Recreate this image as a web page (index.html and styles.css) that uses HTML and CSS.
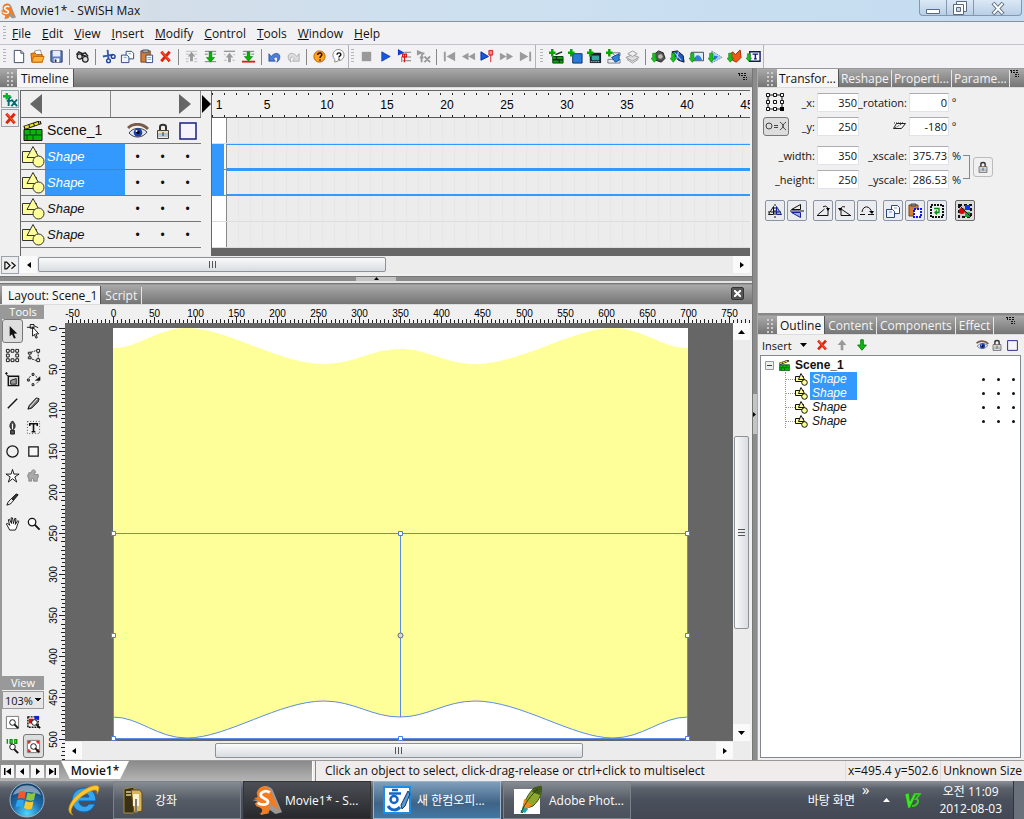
FILE: index.html
```
<!DOCTYPE html>
<html lang="ko">
<head>
<meta charset="utf-8">
<title>Movie1* - SWiSH Max</title>
<meta name="viewport" content="width=device-width, initial-scale=1">
<link rel="stylesheet" href="styles.css">
</head>
<body>
<!-- icon sprite -->
<svg class="sprite" aria-hidden="true">
	<symbol id="i-new" viewBox="0 0 16 16"><path d="M3.500 1.500h7l3 3v10h-10z" fill="#fff" stroke="#3b4a66"/><path d="M10.500 1.500v3h3" fill="#ccd" stroke="#3b4a66"/></symbol>
	<symbol id="i-open" viewBox="0 0 16 16"><path d="M5 2l6-1 2 6-7 2z" fill="#fff" stroke="#999"/><path d="M1 5l4-1 2 2h6v8H2z" fill="#f38b16" stroke="#b35600"/><path d="M2 14l2-6h11l-2 6z" fill="#ffb13b" stroke="#c86a08"/></symbol>
	<symbol id="i-save" viewBox="0 0 16 16"><path d="M2 2h12v12H3l-1-1z" fill="#5d7dc0" stroke="#26365f"/><path d="M4 2h8v6H4z" fill="#e6edf8"/><path d="M5 10h6v4H5z" fill="#fff"/><path d="M6 11h2v3H6z" fill="#26365f"/></symbol>
	<symbol id="i-find" viewBox="0 0 16 16"><path d="M1.500 6L4 3l4 2 3-1 3 4" fill="none" stroke="#222" stroke-width="1.500"/><circle cx="5" cy="8" r="2.700" fill="#ddd" stroke="#222" stroke-width="1.300"/><circle cx="11" cy="11" r="3" fill="#ddd" stroke="#222" stroke-width="1.300"/><path d="M7 6l5 2" stroke="#222" stroke-width="2"/></symbol>
	<symbol id="i-cut" viewBox="0 0 16 16"><path d="M7 1l1 10M2 8l11-2" stroke="#345aa8" stroke-width="2"/><circle cx="8" cy="12.500" r="2" fill="none" stroke="#1b3f9c" stroke-width="1.500"/><circle cx="13" cy="8" r="2" fill="none" stroke="#1b3f9c" stroke-width="1.500"/></symbol>
	<symbol id="i-copy" viewBox="0 0 16 16"><path d="M6.500 2.500h6l2 2v6h-8z" fill="#fff" stroke="#2e467f"/><path d="M1.500 6.500h6l2 2v6h-8z" fill="#eef3ff" stroke="#2e467f"/><path d="M4 9h3M9 5h3" stroke="#7f9ad6"/></symbol>
	<symbol id="i-paste" viewBox="0 0 16 16"><path d="M2 2h10v12H2z" fill="#d37e37" stroke="#7a4215"/><path d="M4 1h6v3H4z" fill="#aaa" stroke="#555"/><path d="M7.500 6.500h7v8h-7z" fill="#fff" stroke="#2e467f"/><path d="M9 9h4M9 11h4" stroke="#7f9ad6"/></symbol>
	<symbol id="i-x" viewBox="0 0 16 16"><path d="M3.500 3l9 10M12.500 3l-9 10" stroke="#e0240c" stroke-width="3"/><path d="M4 3l8 9" stroke="#ff6b4a"/></symbol>
	<symbol id="i-up" viewBox="0 0 16 16"><path d="M8 3l4 5H9.500v5h-3V8H4z" fill="#999"/><path d="M2 2.500h12M2 5.500h3M11 5.500h3M2 10.500h3M11 10.500h3M2 13.500h3M11 13.500h3" stroke="#bbb"/></symbol>
	<symbol id="i-down" viewBox="0 0 16 16"><path d="M2 2.500h12M2 5.500h3M11 5.500h3M2 13.500h12" stroke="#777"/><path d="M8 14l4.500-5H9.500V3h-3v6H3.500z" fill="#00b400" stroke="#006c00" stroke-width=".500"/></symbol>
	<symbol id="i-top" viewBox="0 0 16 16"><path d="M2 2.500h12" stroke="#999" stroke-width="1.500"/><path d="M8 4l4 5H9.500v5h-3V9H4z" fill="#999"/><path d="M2 6h2M12 6h2M2 12h3M11 12h3" stroke="#bbb"/></symbol>
	<symbol id="i-bottom" viewBox="0 0 16 16"><path d="M1 13.500h14" stroke="#e02020" stroke-width="2"/><path d="M2 2.500h12M2 5.500h3M11 5.500h3" stroke="#777"/><path d="M8 13l4.500-5H9.500V3h-3v5H3.500z" fill="#00b400" stroke="#006c00" stroke-width=".500"/></symbol>
	<symbol id="i-undo" viewBox="0 0 16 16"><path d="M2 5v8h7l-2-2.500c3-4 6-1 3.500 3.500 5-3 4-11-2-9-2 .500-3.500 2-4 3z" fill="#4a7fd8" stroke="#1c3f96" stroke-width=".700"/></symbol>
	<symbol id="i-redo" viewBox="0 0 16 16"><path d="M14 5v8H7l2-2.500c-3-4-6-1-3.500 3.500-5-3-4-11 2-9 2 .500 3.500 2 4 3z" fill="#ddd" stroke="#999" stroke-width=".700"/></symbol>
	<symbol id="i-help" viewBox="0 0 16 16"><circle cx="8" cy="8" r="6" fill="#ffa51d" stroke="#b65f00"/><path d="M6 6.500c0-3 4.500-3 4.500-.500 0 1.500-2 1.500-2 3.500M8.500 11v1.500" fill="none" stroke="#3a1500" stroke-width="1.700"/></symbol>
	<symbol id="i-what" viewBox="0 0 16 16"><path d="M4 14v-3a6 6 0 1 1 4 1.500z" fill="#fff" stroke="#888"/><path d="M6.500 6c0-2.500 4-2.500 4 0 0 1.500-2 1-2 3M8.500 10v1.500" fill="none" stroke="#111" stroke-width="1.500"/></symbol>
	<symbol id="i-stop" viewBox="0 0 16 16"><path d="M3 3h10v10H3z" fill="#999"/></symbol>
	<symbol id="i-play" viewBox="0 0 16 16"><path d="M4 3l9 5-9 5z" fill="#1857e0" stroke="#06309a" stroke-width=".700"/></symbol>
	<symbol id="i-playtl" viewBox="0 0 16 16"><path d="M8 3.500h7M7 8.500h8M6 12.500h9M5 8v6" stroke="#777"/><path d="M1 0l7 4-7 3z" fill="#1240d0"/><path d="M8 5v9M6 5.500h4v3H6z" stroke="#d41717" stroke-width="1.300" fill="none"/></symbol>
	<symbol id="i-playfx" viewBox="0 0 16 16"><path d="M1 1l7 3-7 3z" fill="#999"/><path d="M9 5c-3-1-3 1-3 9M4 9h4M9 8l6 6M15 8l-6 6" stroke="#999" stroke-width="2" fill="none"/></symbol>
	<symbol id="i-first" viewBox="0 0 16 16"><path d="M2 3h2v10H2zM14 3v10L5 8z" fill="#9a9a9a"/></symbol>
	<symbol id="i-rew" viewBox="0 0 16 16"><path d="M8 4v8L1 8zM15 4v8L8 8z" fill="#9a9a9a"/></symbol>
	<symbol id="i-playto" viewBox="0 0 16 16"><path d="M1 3l8 5-8 4z" fill="#1857e0" stroke="#06309a"/><path d="M9.500 1.500h4v5h-4z" fill="#f88" stroke="#d41717"/><path d="M11.500 6v8" stroke="#d41717"/></symbol>
	<symbol id="i-ff" viewBox="0 0 16 16"><path d="M8 4v8l7-4zM1 4v8l7-4z" fill="#9a9a9a"/></symbol>
	<symbol id="i-last" viewBox="0 0 16 16"><path d="M12 3h2v10h-2zM2 3v10l9-5z" fill="#9a9a9a"/></symbol>
	<symbol id="plus" viewBox="0 0 16 16"><path d="M4 0v9M0 4.500h8" stroke="#00a800" stroke-width="3"/></symbol>
	<symbol id="i-addscene" viewBox="0 0 16 16"><path d="M4 8h11v7H4z" fill="#0a0" stroke="#041"/><path d="M7 6l7-3M4 11.500h11M8 8v3M11 12v3" stroke="#222" stroke-width="1.500"/><use href="#plus" width="14" height="14"/></symbol>
	<symbol id="i-addmovie" viewBox="0 0 16 16"><path d="M5 5h10v10H5z" fill="#277bd8" stroke="#0b2d6b"/><use href="#plus" width="14" height="14"/></symbol>
	<symbol id="i-addfilm" viewBox="0 0 16 16"><path d="M3 4h12v11H3z" fill="#1a2230"/><path d="M5 7h8v5H5z" fill="#32a6a0"/><path d="M4 13.500h10" stroke="#fff" stroke-dasharray="1 1"/><use href="#plus" width="14" height="14"/></symbol>
	<symbol id="i-addbtn" viewBox="0 0 16 16"><path d="M7 4h8v3H9zM2 11h13v4H2z" fill="#e6edf5" stroke="#778"/><path d="M6 9l8-4v7l-4 2z" fill="#2d83d6" stroke="#124a9c"/><use href="#plus" width="14" height="14"/></symbol>
	<symbol id="i-layers" viewBox="0 0 16 16"><path d="M1 9l7-3 7 3-7 4z" fill="#ddd" stroke="#999"/><path d="M3 5l5-3 5 3-5 3z" fill="#eee" stroke="#999"/><path d="M2 11l6 4 6-4" fill="none" stroke="#999"/></symbol>
	<symbol id="inarrow" viewBox="0 0 16 16"><path d="M4 15l4-5H6V4H2v6H0z" fill="#16c21b" stroke="#067c0b" stroke-width=".700"/></symbol>
	<symbol id="i-snd" viewBox="0 0 16 16"><path d="M3 6l5-4 5 2 2 6-4 4-6-2z" fill="#555" stroke="#222"/><circle cx="10" cy="8" r="2.500" fill="#bbb"/><use href="#inarrow" width="14" height="16"/></symbol>
	<symbol id="i-anim" viewBox="0 0 16 16"><path d="M2 3l6-1 6 5 1 7-6-2-4-5z" fill="#1c5ec8" stroke="#111"/><path d="M5 4l7 8M9 3l-2 8" stroke="#dfe8ff"/><use href="#inarrow" width="14" height="16"/></symbol>
	<symbol id="i-img" viewBox="0 0 16 16"><path d="M2.500 3.500h13v9h-13z" fill="#dcefff" stroke="#444"/><path d="M6 12c0-7 6-7 8 0z" fill="#2f7fe0"/><use href="#inarrow" width="14" height="16"/></symbol>
	<symbol id="i-vec" viewBox="0 0 16 16"><path d="M4 2l11 7-11 6z" fill="#a4d6fb" stroke="#888" stroke-dasharray="2 1"/><path d="M6 7l5 1-4 4z" fill="#2a6fda"/><use href="#inarrow" width="14" height="16"/></symbol>
	<symbol id="i-vid" viewBox="0 0 16 16"><path d="M3 6l3-3 3 3 5-5 1 8-5 5-6-3z" fill="#f05a18" stroke="#a32400"/><use href="#inarrow" width="14" height="16"/></symbol>
	<symbol id="i-txt" viewBox="0 0 16 16"><path d="M4 3h11v10H4z" fill="#fff" stroke="#101c5a" stroke-width="1.500"/><path d="M7 5.500h6M10 5v6M8.500 10.500h3" stroke="#101c5a" stroke-width="1.500"/><use href="#inarrow" width="12" height="16"/></symbol>
	<symbol id="i-menu" viewBox="0 0 10 10"><path d="M0 1.500h8M3 3.500h6M5 5.500h4M5 7.500h4M1.500 2v2" fill="none" stroke="#111" stroke-dasharray="2 1"/></symbol>
	<symbol id="i-fx" viewBox="0 0 16 16"><path d="M9 6c-3-1-3 1-3 9M4 9.500h5M9 8l6 7M15 8l-6 7" stroke="#046a72" stroke-width="2" fill="none"/><path d="M4 1v7M0 4.500h8" stroke="#00b52a" stroke-width="2.500"/></symbol>
	<symbol id="i-shape" viewBox="0 0 24 24"><path d="M1.500 6.500h14v11h-14z" fill="#ff9" stroke="#333"/><path d="M12 1.500l6 11H6z" fill="#ff9" stroke="#333"/><circle cx="17.500" cy="16.500" r="5.500" fill="#ff9" stroke="#333"/></symbol>
	<symbol id="i-shape-s" viewBox="0 0 13 13"><path d="M.500 3.500h8v5h-8z" fill="#ff9" stroke="#111"/><path d="M6 .500l3.500 6h-6z" fill="#ff9" stroke="#111"/><circle cx="9.500" cy="9.500" r="2.800" fill="#ff9" stroke="#111"/></symbol>
	<symbol id="i-scene" viewBox="0 0 20 20"><path d="M1 8.500h18v11H1z" fill="#05b60b" stroke="#111"/><path d="M1 14h18M7 9v5M13 9v5M10 14v5M4 14v5" stroke="#064c08"/><path d="M1 7L18 1" stroke="#111" stroke-width="4"/><path d="M2 6.500L17 1.500" stroke="#e9e020" stroke-width="2.500" stroke-dasharray="4 1"/></symbol>
	<symbol id="i-eye" viewBox="0 0 22 16"><path d="M1 5C6 0 15 0 21 6" fill="none" stroke="#7a5a48" stroke-width="3"/><path d="M2 10c4-6 13-6 18-1-4 6-13 7-18 1z" fill="#dde4f4" stroke="#444"/><circle cx="11" cy="9.500" r="4.300" fill="#1d3fac"/><circle cx="11" cy="9.500" r="1.700" fill="#001"/><circle cx="9.500" cy="8" r="1" fill="#fff"/></symbol>
	<symbol id="i-lock" viewBox="0 0 14 16"><path d="M4 8V4c0-3 6-3 6 0v4" fill="none" stroke="#333" stroke-width="2"/><path d="M1.500 7.500h11v8h-11z" fill="#eee" stroke="#444"/><path d="M2 9h10" stroke="#f0d070"/><path d="M2 11h10" stroke="#6898c8"/><path d="M2 13h10" stroke="#9a9a9a"/><path d="M7 9v4" stroke="#333"/></symbol>
	<symbol id="i-box" viewBox="0 0 18 18"><path d="M1 1h16v16H1z" fill="#f4f4fa" stroke="#1a1f80" stroke-width="1.500"/></symbol>
	<symbol id="t-arrow" viewBox="0 0 16 16"><path d="M5 2v11l2.500-2 2 4.500 2-.700-2-4.500 3.500-.300z" fill="#111"/></symbol>
	<symbol id="t-sub" viewBox="0 0 16 16"><path d="M7 3v10l2-2 1.500 4 1.500-.500-1.500-4h3z" fill="#fff" stroke="#111"/><path d="M1 3.500h5M4.500.500h4v4h-4zM9 2l4 2" fill="none" stroke="#111"/></symbol>
	<symbol id="t-scale" viewBox="0 0 16 16"><path d="M3 3h10v10H3z" fill="none" stroke="#111" stroke-dasharray="1 1"/><g fill="#fff" stroke="#111"><path d="M1.500 1.500h3v3h-3zM6.500 1.500h3v3h-3zM11.500 1.500h3v3h-3zM1.500 6.500h3v3h-3zM11.500 6.500h3v3h-3zM1.500 11.500h3v3h-3zM6.500 11.500h3v3h-3zM11.500 11.500h3v3h-3z"/></g></symbol>
	<symbol id="t-persp" viewBox="0 0 16 16"><path d="M13 2L4 5v6l9 3z" fill="none" stroke="#111" stroke-dasharray="2 1"/><path d="M11.500 1.500h3v3h-3zM11.500 11.500h3v3h-3zM2.500 4.500h3v2h-3zM2.500 9.500h3v2h-3z" fill="#fff" stroke="#111"/></symbol>
	<symbol id="t-fill" viewBox="0 0 16 16"><path d="M3.500 4.500h11v10h-11z" fill="#ddd" stroke="#111" stroke-width="1.500"/><path d="M6 13V9l6-2v6z" fill="#999" stroke="#222"/><path d="M0 1.500h3M1.500 0v3l3 2" fill="none" stroke="#111"/></symbol>
	<symbol id="t-motion" viewBox="0 0 16 16"><path d="M3 10C2 4 8 1 12 6" fill="none" stroke="#111" stroke-dasharray="2 2"/><path d="M6.500 1.500h2v2h-2zM1.500 7.500h2v2h-2zM6.500 12.500h2v2h-2z" fill="#fff" stroke="#111"/><path d="M10 9h5V5zM11 12l3-2" fill="#111" stroke="#111" stroke-width=".500"/></symbol>
	<symbol id="t-line" viewBox="0 0 16 16"><path d="M3 13L13 3" stroke="#111" stroke-width="1.500"/></symbol>
	<symbol id="t-pencil" viewBox="0 0 16 16"><path d="M2 14l1.500-4L11 2l3 1-1 3-7 7z" fill="#777" stroke="#111"/><path d="M4 12l8-9" stroke="#fff"/></symbol>
	<symbol id="t-pen" viewBox="0 0 16 16"><path d="M8 1c-4 4-3 7-1 9h2c2-2 3-5-1-9zM6 11h4v4H6z" fill="#555" stroke="#111"/><path d="M8 4v6" stroke="#fff"/></symbol>
	<symbol id="t-text" viewBox="0 0 16 16"><path d="M1.500 1.500h13v13h-13z" fill="none" stroke="#444" stroke-dasharray="1 2"/><path d="M4 6.500V4h8v2.500M8 4v9M6 12.500h4" fill="none" stroke="#111" stroke-width="1.700"/></symbol>
	<symbol id="t-oval" viewBox="0 0 16 16"><circle cx="8" cy="8" r="6" fill="none" stroke="#111" stroke-width="1.300"/></symbol>
	<symbol id="t-rect" viewBox="0 0 16 16"><path d="M3 3h10v10H3z" fill="#f7f7f7" stroke="#111" stroke-width="1.300"/></symbol>
	<symbol id="t-star" viewBox="0 0 16 16"><path d="M8 1.500l1.500 5H15L10.500 9.500l2 5.500L8 11.500 3.500 15l2-5.500L1 6.500h5.500z" fill="#fff" stroke="#111"/></symbol>
	<symbol id="t-comp" viewBox="0 0 16 16"><path d="M3 5h3c-1-4 5-4 4 0h-1v2h4v3h-1v4H8v-3H6v3H3v-4H2V7h1z" fill="#aaa" stroke="#888"/></symbol>
	<symbol id="t-knife" viewBox="0 0 16 16"><path d="M2 14c1-4 3-5 5-7l2 2c-2 3-3 4-7 5z" fill="#eee" stroke="#111"/><path d="M7 7l5-5 2 1-5 6z" fill="#333" stroke="#111"/></symbol>
	<symbol id="t-hand" viewBox="0 0 16 16"><path d="M5 15L1.500 8.500l1-1L5 10 3.500 4l1.200-.500L7 8l-.500-6H8l1 6 1.500-5.500 1.200.300L11 9l2.500-4 1.200.700C13 9 13 12 11 15z" fill="#fff" stroke="#111"/></symbol>
	<symbol id="t-zoom" viewBox="0 0 16 16"><circle cx="6.500" cy="6.500" r="4" fill="#fff" stroke="#111" stroke-width="1.300"/><path d="M9.500 9.500l5 5" stroke="#111" stroke-width="2"/></symbol>
	<symbol id="v-page" viewBox="0 0 16 16"><path d="M1.500 1.500h13v13h-13z" fill="#fff" stroke="#777"/><circle cx="8" cy="8" r="3" fill="#fff" stroke="#111"/><path d="M10 10l4 4" stroke="#111" stroke-width="2"/></symbol>
	<symbol id="v-sel" viewBox="0 0 16 16"><path d="M2 2h11v11H2z" fill="none" stroke="#111" stroke-width="1.500" stroke-dasharray="2 1"/><path d="M3 4h5v5H3z" fill="#d01010"/><path d="M9 1h5v4H9z" fill="#1420c8"/><circle cx="9" cy="8" r="3" fill="#fff" stroke="#111"/><path d="M11 10l4 4" stroke="#111" stroke-width="2"/></symbol>
	<symbol id="v-100" viewBox="0 0 16 16"><path d="M2.500 0v5M5.500.500h2v4h-2zM10.500.500h2v4h-2z" fill="none" stroke="#090" stroke-width="1.500"/><circle cx="8" cy="8.500" r="3" fill="#fff" stroke="#111"/><path d="M10 11l4 4" stroke="#111" stroke-width="2"/></symbol>
	<symbol id="v-fit" viewBox="0 0 16 16"><path d="M1.500 1.500h13v13h-13z" fill="#fff" stroke="#777"/><path d="M3 5V3h2M11 3h2v2M3 11v2h2M11 13h2v-2" fill="none" stroke="#e01010" stroke-width="1.500"/><circle cx="8" cy="8" r="3" fill="#fff" stroke="#111"/><path d="M10 10l4 4" stroke="#111" stroke-width="2"/></symbol>
	<symbol id="x-anchor" viewBox="0 0 20 20"><path d="M3 3h14v14H3z" fill="none" stroke="#111"/><path d="M1.500 1.500h3v3h-3zM8.500 1.500h3v3h-3zM15.500 1.500h3v3h-3zM1.500 8.500h3v3h-3zM8.500 8.500h3v3h-3zM15.500 8.500h3v3h-3zM1.500 15.500h3v3h-3zM8.500 15.500h3v3h-3z" fill="#fff" stroke="#111"/><path d="M15 15h4v4h-4z" fill="#000"/></symbol>
	<symbol id="x-ox" viewBox="0 0 22 12"><circle cx="4" cy="6" r="3" fill="none" stroke="#444"/><path d="M9 5.500h4M9 7.500h4M15 2c4 3 4 5 0 8M21 2c-4 3-4 5 0 8" fill="none" stroke="#444"/></symbol>
	<symbol id="x-fliph" viewBox="0 0 16 16"><path d="M1.500 11.500l5-8v8z" fill="none" stroke="#111"/><path d="M9.500 3.500v8h5z" fill="#9ab0e8" stroke="#1420a0"/><path d="M8 1v14M1 9h13" stroke="#111" stroke-dasharray="2 1"/></symbol>
	<symbol id="x-flipv" viewBox="0 0 16 16"><path d="M2.500 6.500l9-5v5z" fill="none" stroke="#111"/><path d="M2.500 9.500h9v5z" fill="#9ab0e8" stroke="#1420a0"/><path d="M1 8h14" stroke="#111"/></symbol>
	<symbol id="x-rotr" viewBox="0 0 16 16"><path d="M2 12.500h11V6M2.500 12l7-6M8 4c3-2 5 0 5 3" fill="none" stroke="#111"/><path d="M11 5h4l-2 3z"/></symbol>
	<symbol id="x-rotl" viewBox="0 0 16 16"><path d="M14 12.500H4V6M4 6l9 6M8 4C5 3 4 4 4 7" fill="none" stroke="#111"/><path d="M5 5H1l2 3z"/></symbol>
	<symbol id="x-rot180" viewBox="0 0 16 16"><path d="M1 11.500h5M3 9c1-7 8-7 10 1M9 11.500h6" fill="none" stroke="#111"/><path d="M10 8h5l-2 3z"/></symbol>
	<symbol id="x-pastet" viewBox="0 0 16 16"><path d="M2 2h9v11H2z" fill="#d37e37" stroke="#7a4215"/><path d="M4 1h5v2H4z" fill="#999" stroke="#444"/><path d="M7 6h7v8H7z" fill="#fff" stroke="#1010ff" stroke-width="2" stroke-dasharray="2 1"/></symbol>
	<symbol id="x-reset" viewBox="0 0 16 16"><path d="M2 2h12v12H2z" fill="none" stroke="#111" stroke-width="2" stroke-dasharray="2 1"/><path d="M5 5.500h5v4H6M8 7.500l-2 2 2 2" fill="none" stroke="#0a8a10" stroke-width="1.300"/></symbol>
	<symbol id="x-group" viewBox="0 0 16 16"><path d="M2 2h12v12H2z" fill="#ccc" stroke="#111" stroke-width="2" stroke-dasharray="3 2"/><circle cx="5" cy="8" r="3" fill="#d00"/><path d="M8 2h5v5H8z" fill="#1030ff"/><path d="M8 9h5v5H8z" fill="#07b010"/><path d="M2 2l12 12" stroke="#111"/></symbol>
	<symbol id="swish" viewBox="0 0 32 32"><path d="M6 8C9 0 17-1 22 5l10 24-7 2-8-6 1 5-9 2c4-6 1-8-1-9L5 21l3-3-8-2 7-1z" fill="#999"/><path d="M5 8C8 0 16-1 20 6l9 21-10-7c2 8-2 12-11 11 6-4 2-7-3-8l-2-3 4-4-5-2 4-1z" fill="#f47b20"/><path d="M19 8c-6-4-13 2-8 5l5 3c4 4-4 7-10 3" fill="none" stroke="#fff" stroke-width="3"/></symbol>
</svg>

<div class="app">
	<header class="titlebar">
		<svg class="ic16"><use href="#swish"/></svg>
		<span class="title">Movie1* - SWiSH Max</span>
		<div class="winbtns">
			<button aria-label="Minimize"><svg width="16" height="16"><path d="M1.500 9.500h13v4h-13z" fill="#fff" stroke="#596983"/></svg></button>
			<button aria-label="Restore"><svg width="16" height="16"><path d="M4.500 1.500h10v10h-10z" fill="#fff" stroke="#596983"/><path d="M1.500 4.500h10v10h-10z" fill="#fff" stroke="#596983"/><path d="M4.500 7.500h4v4h-4z" fill="#ccd9e8" stroke="#596983"/></svg></button>
			<button class="wide" aria-label="Close"><svg width="16" height="16"><path d="M3 3l10 11M13 3L3 14" stroke="#596983" stroke-width="4"/><path d="M3.500 3.500l9 10M12.500 3.500l-9 10" stroke="#fff" stroke-width="2"/></svg></button>
		</div>
	</header>

	<nav class="menubar">
		<i class="grip"></i>
		<a href="#"><u>F</u>ile</a><a href="#"><u>E</u>dit</a><a href="#"><u>V</u>iew</a><a href="#"><u>I</u>nsert</a><a href="#"><u>M</u>odify</a><a href="#"><u>C</u>ontrol</a><a href="#"><u>T</u>ools</a><a href="#"><u>W</u>indow</a><a href="#"><u>H</u>elp</a>
	</nav>

	<div class="toolbars">
		<div class="toolbar">
			<i class="grip"></i>
			<button><svg><use href="#i-new"/></svg></button><button><svg><use href="#i-open"/></svg></button><button><svg><use href="#i-save"/></svg></button><i class="sep"></i>
			<button><svg><use href="#i-find"/></svg></button><i class="sep"></i>
			<button><svg><use href="#i-cut"/></svg></button><button><svg><use href="#i-copy"/></svg></button><button><svg><use href="#i-paste"/></svg></button><button><svg><use href="#i-x"/></svg></button><i class="sep"></i>
			<button><svg><use href="#i-up"/></svg></button><button><svg><use href="#i-down"/></svg></button><button><svg><use href="#i-top"/></svg></button><button><svg><use href="#i-bottom"/></svg></button><i class="sep"></i>
			<button><svg><use href="#i-undo"/></svg></button><button><svg><use href="#i-redo"/></svg></button><i class="sep"></i>
			<button><svg><use href="#i-help"/></svg></button><button><svg><use href="#i-what"/></svg></button>
		</div>
		<div class="toolbar">
			<i class="grip"></i>
			<button><svg><use href="#i-stop"/></svg></button><button><svg><use href="#i-play"/></svg></button><button><svg><use href="#i-playtl"/></svg></button><button><svg><use href="#i-playfx"/></svg></button><i class="sep"></i>
			<button><svg><use href="#i-first"/></svg></button><button><svg><use href="#i-rew"/></svg></button><button><svg><use href="#i-playto"/></svg></button><button><svg><use href="#i-ff"/></svg></button><button><svg><use href="#i-last"/></svg></button>
		</div>
		<div class="toolbar objects">
			<i class="grip"></i>
			<button><svg><use href="#i-addscene"/></svg></button><button><svg><use href="#i-addmovie"/></svg></button><button><svg><use href="#i-addfilm"/></svg></button><button><svg><use href="#i-addbtn"/></svg></button><button><svg><use href="#i-layers"/></svg></button><i class="sep"></i>
			<button><svg><use href="#i-snd"/></svg></button><button><svg><use href="#i-anim"/></svg></button><button><svg><use href="#i-img"/></svg></button><button><svg><use href="#i-vec"/></svg></button><button><svg><use href="#i-vid"/></svg></button><button><svg><use href="#i-txt"/></svg></button>
		</div>
	</div>

	<main class="work">
		<div class="left">
			<section class="timeline">
				<div class="tabs">
					<i class="grip2"></i>
					<button class="tab on">Timeline</button>
					<svg class="panelmenu"><use href="#i-menu"/></svg>
				</div>
				<div class="tlbody">
					<div class="tlside">
						<button class="sbtn"><svg><use href="#i-fx"/></svg></button>
						<button class="sbtn"><svg><use href="#i-x"/></svg></button>
						<button class="sbtn last"><svg viewBox="0 0 16 16"><path d="M2 4.500h2l3.500 3.500L4 11.500H2zM9 4.500l4 3.500-4 3.500" fill="none" stroke="#111" stroke-width="1.300"/></svg></button>
					</div>
					<div class="tlmain">
						<div class="tlgrid">
							<div class="layers">
								<div class="shuttle">
									<div class="half"><svg width="12" height="20"><path d="M12 0v20L0 10z" fill="#666"/></svg></div>
									<div class="half r"><svg width="12" height="20"><path d="M0 0v20l12-10z" fill="#666"/></svg></div>
								</div>
								<div class="layer scene"><svg class="ic20"><use href="#i-scene"/></svg><span class="name">Scene_1</span><span class="c"><svg class="eye"><use href="#i-eye"/></svg></span><span class="c"><svg class="lock"><use href="#i-lock"/></svg></span><span class="c"><svg class="box"><use href="#i-box"/></svg></span></div>
								<div class="layer sel"><svg class="ic24"><use href="#i-shape"/></svg><span class="name">Shape</span><span class="c">•</span><span class="c">•</span><span class="c">•</span></div>
								<div class="layer sel"><svg class="ic24"><use href="#i-shape"/></svg><span class="name">Shape</span><span class="c">•</span><span class="c">•</span><span class="c">•</span></div>
								<div class="layer"><svg class="ic24"><use href="#i-shape"/></svg><span class="name">Shape</span><span class="c">•</span><span class="c">•</span><span class="c">•</span></div>
								<div class="layer"><svg class="ic24"><use href="#i-shape"/></svg><span class="name">Shape</span><span class="c">•</span><span class="c">•</span><span class="c">•</span></div>
							</div>
							<div class="playhead"><svg width="9" height="18"><path d="M0 0v18l9-9z"/></svg></div>
							<div class="frames">
								<svg class="fruler" id="frameRuler"></svg>
								<div class="frow"><i></i><b></b></div>
								<div class="frow sel"><i></i><b></b></div>
								<div class="frow sel"><i></i><b></b></div>
								<div class="frow"><i></i><b></b></div>
								<div class="frow"><i></i><b></b></div>
							</div>
						</div>
						<div class="hscroll tl">
							<button class="sb"><svg width="4" height="6"><path d="M4 0v6L0 3z"/></svg></button>
							<div class="track"><div class="thumb"></div></div>
							<button class="sb"><svg width="4" height="6"><path d="M0 0v6l4-3z"/></svg></button>
						</div>
					</div>
				</div>
			</section>

			<div class="hsplit"><span><svg width="5" height="3"><path d="M0 3h5L2.500 0z"/></svg></span></div>

			<section class="layout">
				<div class="tabs tall">
					<button class="tab on">Layout: Scene_1</button>
					<button class="tab">Script</button>
					<button class="close" aria-label="Close panel"><svg width="7" height="7"><path d="M0 0l7 7M7 0L0 7" stroke="#fff" stroke-width="2"/></svg></button>
				</div>
				<div class="lbody">
					<aside class="tools">
						<h2>Tools</h2>
						<div class="tgrid">
							<button class="on"><svg><use href="#t-arrow"/></svg></button><button><svg><use href="#t-sub"/></svg></button>
							<button><svg><use href="#t-scale"/></svg></button><button><svg><use href="#t-persp"/></svg></button>
							<button><svg><use href="#t-fill"/></svg></button><button><svg><use href="#t-motion"/></svg></button>
							<button><svg><use href="#t-line"/></svg></button><button><svg><use href="#t-pencil"/></svg></button>
							<button><svg><use href="#t-pen"/></svg></button><button><svg><use href="#t-text"/></svg></button>
							<button><svg><use href="#t-oval"/></svg></button><button><svg><use href="#t-rect"/></svg></button>
							<button><svg><use href="#t-star"/></svg></button><button><svg><use href="#t-comp"/></svg></button>
							<button><svg><use href="#t-knife"/></svg></button><span></span>
							<button><svg><use href="#t-hand"/></svg></button><button><svg><use href="#t-zoom"/></svg></button>
						</div>
						<h2 class="view">View</h2>
						<select class="zoomsel" aria-label="Zoom"><option>103%</option></select>
						<div class="tgrid">
							<button><svg><use href="#v-page"/></svg></button><button><svg><use href="#v-sel"/></svg></button>
							<button><svg><use href="#v-100"/></svg></button><button class="on"><svg><use href="#v-fit"/></svg></button>
						</div>
					</aside>
					<svg class="vruler" id="vRuler"></svg>
					<div class="stagewrap">
						<svg class="hruler" id="hRuler"></svg>
						<div class="stagerow">
							<svg class="stage">
								<path d="M48 5h575v410H48z" fill="#fff"/>
								<path d="M48 25C74 25 92 5 122 5 162 5 214 41 259 41 289 41 307 26 335 26 363 26 380 41 410 41 456 41 508 5 548 5 578 5 596 25 623 25V394C596 394 578 415 548 415 508 415 456 378 410 378 380 378 363 394 335 394 307 394 289 378 259 378 214 378 162 415 122 415 92 415 74 394 48 394z" fill="#ffff99"/>
								<g fill="none" stroke="#5b8be6">
									<path d="M48.500 210.500H622.500V415.500H48.500zM335.500 210v184"/>
									<path d="M48 394C74 394 92 415 122 415 162 415 214 378 259 378 289 378 307 394 335 394 363 394 380 378 410 378 456 378 508 415 548 415 578 415 596 394 623 394"/>
								</g>
								<g fill="#fff" stroke="#4a7ee0">
									<path d="M46.500 208.500h4v4h-4zM333.500 208.500h4v4h-4zM620.500 208.500h4v4h-4zM46.500 310.500h4v4h-4zM620.500 310.500h4v4h-4zM46.500 413.500h4v4h-4zM333.500 413.500h4v4h-4zM620.500 413.500h4v4h-4z"/>
									<circle cx="335.500" cy="312.500" r="2.500" fill="#cdd" stroke="#667"/>
								</g>
							</svg>
							<div class="vscroll">
								<button class="sb"><svg width="7" height="4"><path d="M0 4h7L3.500 0z"/></svg></button>
								<div class="track"><div class="thumb"></div></div>
								<button class="sb"><svg width="7" height="4"><path d="M0 0h7L3.500 4z"/></svg></button>
							</div>
						</div>
						<div class="hscroll st">
							<button class="sb"><svg width="4" height="6"><path d="M4 0v6L0 3z"/></svg></button>
							<div class="track"><div class="thumb"></div></div>
							<button class="sb"><svg width="4" height="6"><path d="M0 0v6l4-3z"/></svg></button>
						</div>
					</div>
				</div>
			</section>
		</div>

		<div class="vsplit"><span><svg width="3" height="5"><path d="M0 0v5l3-2.500z"/></svg></span></div>

		<div class="right">
			<section class="transform">
				<div class="tabs">
					<i class="grip2"></i>
					<button class="tab on">Transfor...</button><button class="tab">Reshape</button><button class="tab">Properti...</button><button class="tab">Parame...</button>
					<svg class="panelmenu"><use href="#i-menu"/></svg>
				</div>
				<form class="tf">
					<div class="tfrow">
						<svg class="anchor"><use href="#x-anchor"/></svg>
						<label for="x">_x:</label><input id="x" value="350"><label for="rot">_rotation:</label><input id="rot" value="0"><span>º</span>
					</div>
					<div class="tfrow">
						<button type="button" class="ox"><svg><use href="#x-ox"/></svg></button>
						<label for="y">_y:</label><input id="y" value="250"><label for="skew" aria-label="Skew"><svg width="14" height="8"><path d="M3.500 1.500h9l-4 5h-8z" fill="none" stroke="#222"/><path d="M1 1h9M2 6l8-5" stroke="#222" stroke-dasharray="1 1"/></svg></label><input id="skew" value="-180"><span>º</span>
					</div>
					<div class="scale">
						<div>
							<div class="tfrow">
								<label class="w2" for="w">_width:</label><input id="w" value="350"><label for="xs">_xscale:</label><input id="xs" value="375.73"><span>%</span>
							</div>
							<div class="tfrow">
								<label class="w2" for="h">_height:</label><input id="h" value="250"><label for="ys">_yscale:</label><input id="ys" value="286.53"><span>%</span>
							</div>
						</div>
						<i class="bracket"></i>
						<button type="button" class="linkbtn"><svg><use href="#i-lock"/></svg></button>
					</div>
				</form>
				<div class="tbtns">
					<button><svg><use href="#x-fliph"/></svg></button><button><svg><use href="#x-flipv"/></svg></button><i></i>
					<button><svg><use href="#x-rotr"/></svg></button><button><svg><use href="#x-rotl"/></svg></button><button><svg><use href="#x-rot180"/></svg></button><i></i>
					<button><svg><use href="#i-copy"/></svg></button><button><svg><use href="#x-pastet"/></svg></button><button><svg><use href="#x-reset"/></svg></button><i></i>
					<button class="on"><svg><use href="#x-group"/></svg></button>
				</div>
			</section>

			<section class="outline">
				<div class="tabs">
					<i class="grip2"></i>
					<button class="tab on">Outline</button><button class="tab">Content</button><button class="tab">Components</button><button class="tab">Effect</button>
					<svg class="panelmenu"><use href="#i-menu"/></svg>
				</div>
				<div class="otools">
					<button class="insert">Insert<svg width="7" height="4"><path d="M0 0h7L3.500 4z"/></svg></button>
					<button><svg class="ic14"><use href="#i-x"/></svg></button>
					<button><svg class="ic14" viewBox="0 0 16 16"><path d="M8 2l5 6h-3.500v6h-3V8H3z" fill="#999"/></svg></button>
					<button><svg class="ic14" viewBox="0 0 16 16"><path d="M8 14l5-6h-3.500V2h-3v6H3z" fill="#12b812" stroke="#067506"/></svg></button>
					<span class="push"></span>
					<svg class="oeye"><use href="#i-eye"/></svg><svg class="olock"><use href="#i-lock"/></svg><svg class="obox"><use href="#i-box"/></svg>
				</div>
				<div class="tree">
					<div class="node root"><svg width="9" height="9"><path d="M.500.500h8v8h-8z" fill="#eee" stroke="#999"/><path d="M2 4.500h5" stroke="#2a3a8a"/></svg><svg class="tscene"><use href="#i-scene"/></svg><strong>Scene_1</strong></div>
					<div class="kids">
						<div class="node sel"><svg class="tshape"><use href="#i-shape-s"/></svg><em>Shape</em><span class="dots"><i></i><i></i><i></i></span></div>
						<div class="node sel"><svg class="tshape"><use href="#i-shape-s"/></svg><em>Shape</em><span class="dots"><i></i><i></i><i></i></span></div>
						<div class="node"><svg class="tshape"><use href="#i-shape-s"/></svg><em>Shape</em><span class="dots"><i></i><i></i><i></i></span></div>
						<div class="node"><svg class="tshape"><use href="#i-shape-s"/></svg><em>Shape</em><span class="dots"><i></i><i></i><i></i></span></div>
					</div>
				</div>
			</section>
		</div>
	</main>

	<footer class="status">
		<div class="docs">
			<button class="nav"><svg width="7" height="7"><path d="M0 0h1.500v7H0zM7 0v7L2 3.500z"/></svg></button>
			<button class="nav"><svg width="7" height="7"><path d="M5 0v7L1 3.500z"/></svg></button>
			<button class="nav"><svg width="7" height="7"><path d="M2 0v7l4-3.500z"/></svg></button>
			<button class="nav"><svg width="7" height="7"><path d="M5.500 0H7v7H5.500zM0 0v7l5-3.500z"/></svg></button>
			<button class="doctab">Movie1*</button>
		</div>
		<div class="hint">Click an object to select, click-drag-release or ctrl+click to multiselect</div>
		<div class="cell">x=495.4 y=502.6</div>
		<div class="cell">Unknown Size</div>
	</footer>

	<footer class="taskbar">
		<button class="orb" aria-label="Start"><svg width="36" height="36" viewBox="0 0 36 36"><defs><radialGradient id="og" cx=".5" cy=".9" r=".9"><stop offset="0" stop-color="#4fd6ff"/><stop offset=".5" stop-color="#1c6aa8"/><stop offset="1" stop-color="#123a66"/></radialGradient></defs><circle cx="18" cy="18" r="17" fill="url(#og)" stroke="#9fb6cc"/><path d="M4 13C9 0 27 0 32 13 24 9 12 9 4 13z" fill="#fff" opacity=".45"/><path d="M10 10c3-1.500 5-1 7 0l-1.500 7c-2-1-4-1.500-7 0z" fill="#f1582b"/><path d="M18.500 10.500c3 1.500 5 1.500 8 0L25 18c-3 1-5 1-8-.500z" fill="#8dc63f"/><path d="M8 18.500c3-1.500 5-1 7 0l-1.500 7c-2-1-4.500-1.500-7 0z" fill="#2fa8e8"/><path d="M16.500 19c3 1.500 5 1.500 8 .500l-1.500 7c-3 1.500-5 1-8-.500z" fill="#fdc62f"/></svg></button>
		<button class="ie" aria-label="Internet Explorer"><svg width="34" height="32" viewBox="0 0 34 32"><path d="M17 4c7 0 12 5 12 13H12c0 6 8 7 10 3h6c-2 5-6 8-11 8C9 28 5 22 5 16S10 4 17 4zm-5 9h10c-1-5-9-5-10 0z" fill="#35a6ee" stroke="#0b63b4"/><path d="M6 31C-3 28 4 15 14 8c8-6 18-9 18-4 0 2-1 4-2 6 1-5-3-5-10-1C9 15 0 27 6 31z" fill="#fcc62d" stroke="#c88a10" stroke-width=".700"/></svg></button>
		<button class="task"><svg width="20" height="28" viewBox="0 0 20 28"><path d="M1 3l10-2v26H1z" fill="#3a3014" stroke="#a28b48"/><path d="M3 6h5M3 9h5" stroke="#e2cf8c" stroke-width="1.500"/><path d="M8 4h9l2 3v18l-8 2z" fill="#d8b45a" stroke="#5e4a18"/><path d="M10 8h6v12h-6z" fill="#fff3cf"/><path d="M13 13v14" stroke="#777" stroke-width="2"/></svg><span>강좌</span></button>
		<button class="task dark"><svg width="32" height="30"><use href="#swish"/></svg><span>Movie1* - S...</span></button>
		<button class="task blue"><svg width="28" height="28" viewBox="0 0 28 28"><path d="M1 1h26v26H1z" fill="#fff" stroke="#1b8de6" stroke-width="2"/><path d="M9 4h6M6 7.500h12" stroke="#1467c8" stroke-width="2.500"/><circle cx="11" cy="13.500" r="3.500" fill="none" stroke="#1467c8" stroke-width="2.500"/><path d="M5 20c3 5 9 5 12 1" fill="none" stroke="#1467c8" stroke-width="3"/><path d="M25 5l-7 14 1 4 3-3 5-12z" fill="#4a9dd8" stroke="#235"/></svg><span>새 한컴오피...</span></button>
		<button class="task"><svg width="30" height="30" viewBox="0 0 30 30"><path d="M1 4h26v25H1z" fill="#fff"/><path d="M9 28c1-8 4-17 12-25l7-2c2 5-1 14-8 20l-6 2z" fill="#8fa82a" stroke="#3a5512"/><path d="M21 3l7-2c1 3 0 6-1 9l-8-3z" fill="#3f5a1c"/><path d="M11 14l-1 7 4 3 5-4z" fill="#ef8b1c"/><path d="M7 26l5-3 3 1-3 4z" fill="#15a6b8"/><path d="M8 28C12 18 18 10 25 4" fill="none" stroke="#2c400c"/></svg><span>Adobe Phot...</span></button>
		<div class="tray">
			<span class="desk">바탕 화면</span><span class="chev">»</span>
			<svg width="7" height="4"><path d="M0 4h7L3.500 0z" fill="#fff"/></svg>
			<svg class="v3" width="17" height="18"><path d="M1 3l4-1 1 8 4-8h3L6 17H4z" fill="#45e02c" stroke="#0b7a06" stroke-width=".500"/><path d="M10 3h6l-4 5c4 0 2 7-4 7" fill="none" stroke="#35c81f" stroke-width="2"/></svg>
			<div class="clock"><span>오전 11:09</span><span>2012-08-03</span></div>
			<i class="peek"></i>
		</div>
	</footer>
</div>
<script src="rulers.js"></script>
</body>
</html>
```
FILE: styles.css
```
*{box-sizing: border-box;}
body{margin: 0; font-family: "Open Sans", "Noto Sans CJK KR", sans-serif; font-size: 12px; color: #111;}
button{font: inherit; color: inherit; border: 0; padding: 0; margin: 0; background: none; display: flex; align-items: center; justify-content: center; white-space: nowrap;}
svg{display: block; flex: none;}
.sprite{position: absolute; width: 0; height: 0;}
.app{display: flex; flex-direction: column; height: 100vh; overflow: hidden; background: #f0f0f0;}

/* title, menu, toolbars */
.titlebar{display: flex; align-items: center; height: 22px; gap: 4px; background: linear-gradient(90deg, #e9eef3 0, #d3dde8 15%, #cde0f0 45%, #c3dcf0 100%); border-bottom: 1px solid #8b9299;}
.ic16{width: 16px; height: 18px;}
.winbtns{display: flex; margin: 0 2px 5px auto; height: 16px; border: 1px solid #8397b0; border-top: 0; border-radius: 0 0 4px 4px; background: linear-gradient(#dbe8f5, #b9cfe6);}
.winbtns button{width: 27px; border-right: 1px solid #8397b0;}
.winbtns .wide{width: 47px; border: 0;}
.menubar{display: flex; align-items: center; height: 23px; border-bottom: 1px solid #c4c4c8; background: #f1f1f4;}
.menubar a{color: #111; text-decoration: none; margin-right: 11px;}
.grip{width: 3px; height: 15px; margin: 0 3px; background: repeating-linear-gradient(#b5b5b5 0 1px, transparent 1px 3px);}
.menubar .grip{margin-right: 6px;}
.toolbars{display: flex; height: 23px; background: #f2f2f5;}
.toolbar{display: flex; align-items: center; border-right: 1px solid #b4b4b8;}
.toolbar + .toolbar .grip{margin: 0 3px 0 2px;}
.toolbars .toolbar.objects .grip{margin: 0 4px;}
.toolbar button{width: 19px; height: 20px;}
.toolbar svg{width: 15px; height: 15px;}
.sep{width: 1px; height: 16px; background: #888; margin: 0 3px;}

.work{display: flex; flex: 1; min-height: 0;}
.left{display: flex; flex-direction: column; flex: 1; min-width: 0;}
.right{display: flex; flex-direction: column; width: 266px; background: #f0f0f0;}

/* tab strips */
.tabs{display: flex; align-items: flex-end; height: 20px; flex: none; background: linear-gradient(#a9a9a9, #757575); border-top: 1px solid #999; border-bottom: 1px solid #dcdcdc;}
.tabs.tall{height: 21px;}
.tab{height: 17px; padding: 0 4px; color: #f4f4f4; border-right: 1px solid #e6e6e6;}
.tab.on{background: #f6f6f6; color: #111; border-right-color: #555; height: 18px;}
.tall .tab.on{padding-left: 6px; margin-left: 2px; padding-right: 3px;}
.grip2{width: 8px; height: 15px; margin: 0 3px 1px 6px; background: radial-gradient(#ccc 1px, transparent 1px) 0 0 / 4px 4px;}
.panelmenu{width: 10px; height: 10px; margin: 0 4px 5px auto;}
.right .grip2{flex: none; margin-left: 8px;}
.transform .tab{padding: 0 2px;}
.outline .tab{padding: 0 3px;}
.right .panelmenu{margin: 0 8px 8px auto;}
.close{width: 13px; height: 13px; margin: 0 8px 4px auto; background: #555; border: 1px solid #333; border-radius: 2px;}

/* timeline */
.timeline{height: 208px; flex: none; display: flex; flex-direction: column;}
.tlbody{display: flex; flex: 1; min-height: 0; background: #f0f0f0;}
.tlside{width: 20px; display: flex; flex-direction: column; gap: 1px; padding: 2px 1px 2px 1px;}
.sbtn{width: 18px; height: 18px; border: 1px solid #9aa2ad; background: #eee;}
.sbtn svg{width: 15px; height: 15px;}
.sbtn.last{margin-top: auto;}
.tlmain{flex: 1; min-width: 0; display: flex; flex-direction: column; padding: 2px 2px 2px 0;}
.tlgrid{display: flex; height: 166px; border-top: 1px solid #666; border-left: 1px solid #666;}
.layers{width: 180px;}
.shuttle{display: flex; height: 27px; border-bottom: 1px solid #666;}
.half{flex: 1; display: flex; align-items: center; padding: 0 9px; border-right: 1px solid #888;}
.half.r{justify-content: flex-end;}
.layer{display: flex; align-items: center; height: 26px; border-bottom: 1px solid #777; font: 14px "Liberation Sans", sans-serif;}
.layer .name{width: 80px; line-height: 25px; padding-left: 2px;}
.layer:not(.scene) .name{font-style: italic; font-size: 13px;}
.sel .name{background: #3399ff; color: #fff;}
.ic24{width: 24px; height: 24px;}
.ic20{width: 20px; height: 20px; margin: 0 2px;}
.c{width: 25px; display: flex; justify-content: center; font-size: 12px;}
.eye{width: 22px; height: 16px;}
.lock{width: 14px; height: 16px;}
.box{width: 18px; height: 18px;}
.playhead{width: 11px; padding: 4px 1px; border-right: 1px solid #666;}
.frames{flex: 1; min-width: 0; background: #666;}
.fruler{width: 100%; height: 27px; background: #f0f0f0; border-bottom: 1px solid #555;}
.frow{display: flex; height: 26px; background: #fff; border-bottom: 1px solid #ddd;}
.frow i{width: 14px;}
.frow b{flex: 1; border-left: 1px solid #888; background: repeating-linear-gradient(90deg, #ececec 0 11px, #e7e7e7 11px 12px);}
.frow.sel{border-bottom: 1px solid #39f;}
.frow.sel i{background: #39f; width: 12px; margin-right: 2px;}
.frow.sel b{border-top: 1px solid #39f; border-bottom: 1px solid #39f;}

/* scrollbars */
.hscroll{display: flex; height: 18px; background: #ececec;}
.hscroll .track{flex: 1; display: flex;}
.sb{width: 17px; height: 17px; background: #fafafa;}
.thumb{border: 1px solid #8d9299; border-radius: 2px;}
.hscroll .thumb{background: repeating-linear-gradient(90deg, #555 0 1px, transparent 1px 3px) center / 7px 7px no-repeat, linear-gradient(#fafafa, #d8dde2); height: 15px; margin-top: 1px;}
.hscroll.tl .thumb{width: 50%; margin-left: 1px;}
.hscroll.st{height: 19px; padding: 1px 17px 0 0;}
.hscroll.st .thumb{width: 58%; margin-left: 21%;}
.vscroll{display: flex; flex-direction: column; width: 17px; background: #ececec;}
.vscroll .track{flex: 1; display: grid; grid-template-rows: 96fr 193fr 95fr;}
.vscroll .thumb{grid-row: 2; width: 15px; margin-left: 1px; background: repeating-linear-gradient(#555 0 1px, transparent 1px 3px) center / 7px 7px no-repeat, linear-gradient(90deg, #fafafa, #d8dde2);}

.hsplit{height: 7px; background: #8c8c8c; border-top: 1px solid #777; border-bottom: 2px solid #e4e4e4; display: flex; justify-content: center; flex: none;}
.hsplit span{width: 40px; background: #c4c4c4; display: flex; justify-content: center;}
.vsplit{width: 6px; background: #8c8c8c; border-left: 1px solid #777; border-right: 1px solid #aaa; display: flex; align-items: center;}
.vsplit span{height: 40px; width: 5px; background: #c4c4c4; display: flex; align-items: center;}

/* layout */
.layout{flex: 1; min-height: 0; display: flex; flex-direction: column; border-top: 1px solid #777;}
.lbody{flex: 1; min-height: 0; display: flex; background: #f0f0f0;}
.tools{width: 45px; display: flex; flex-direction: column; border-left: 2px solid #999; padding-bottom: 2px; padding-right: 1px;}
.tools h2{font-weight: normal; font-size: 11px; line-height: 14px; text-align: center; margin: 0; background: #999; color: #fff;}
.tgrid{display: grid; grid-template-columns: 21px 21px; grid-auto-rows: 24px;}
.tgrid svg{width: 15px; height: 15px;}
.tgrid .on{border: 1px solid #777; border-radius: 3px; background: #dedede;}
.tools .view{margin-top: auto;}
.zoomsel{appearance: none; height: 18px; margin: 1px 0; padding: 0 2px; font: 11px "Open Sans", sans-serif; border: 1px solid #999; border-radius: 0; color: #111; background: linear-gradient(45deg, transparent 50%, #111 50%) 31px 6px / 4px 4px no-repeat, linear-gradient(-45deg, transparent 50%, #111 50%) 35px 6px / 4px 4px no-repeat, #e6e6e6;}
.vruler{width: 20px; height: 100%;}
.stagewrap{flex: 1; min-width: 0; display: flex; flex-direction: column; padding-right: 2px;}
.hruler{width: 100%; height: 18px;}
.stagerow{flex: 1; min-height: 0; display: flex;}
.stage{flex: 1; min-width: 0; height: 100%; background: #666;}

/* transform panel */
.transform{height: 247px; border-bottom: 2px solid #888;}
.tf{padding: 2px 0 0 5px; font-size: 11px;}
.tfrow{display: grid; grid-template-columns: 27px 27px 42px 50px 40px 13px; height: 24px; align-items: center;}
.tf label{text-align: right; white-space: nowrap; padding-right: 2px; display: flex; justify-content: flex-end;}
.tf span{padding-left: 3px;}
.tf input{width: 100%; height: 19px; border: 1px solid #e0e3e9; border-top-color: #abadb3; background: #fff; font: inherit; color: inherit; text-align: right; padding: 0 1px;}
.tf .w2{grid-column: 1 / 3;}
.anchor{width: 20px; height: 20px; margin-left: 2px;}
.ox{width: 26px; height: 19px; border: 1px solid #777; border-radius: 3px; background: #ddd;}
.ox svg{width: 22px; height: 12px;}
.scale{display: flex; align-items: center; margin-top: 5px;}
.bracket{width: 7px; height: 24px; border: 1px solid #888; border-left: 0; margin: 0 3px 0 1px;}
.linkbtn{width: 20px; height: 20px; border: 1px solid #bbb; border-radius: 3px;}
.linkbtn svg{width: 10px; height: 12px;}
.tbtns{display: flex; gap: 2px; padding: 9px 0 0 7px;}
.tbtns i{width: 2px;}
.tbtns button{width: 20px; height: 21px; border: 1px solid #8a94a3; border-radius: 2px; background: #ebecef;}
.tbtns svg{width: 16px; height: 16px;}
.tbtns .on{background: #ddd; border-color: #666; margin-left: 2px;}

/* outline panel */
.outline{flex: 1; min-height: 0; display: flex; flex-direction: column; padding-bottom: 2px;}
.otools{display: flex; align-items: center; height: 20px; padding: 0 6px 0 4px; gap: 6px; font-size: 11px;}
.insert{gap: 8px; margin-right: 2px;}
.ic14{width: 14px; height: 14px;}
.push{flex: 1;}
.oeye{width: 13px; height: 10px;}
.olock{width: 10px; height: 12px; margin-left: -3px;}
.obox{width: 11px; height: 11px; margin-left: -1px;}
.tree{flex: 1; margin: 0 3px 0 2px; border: 1px solid #828790; background: #fff; padding: 2px 5px 2px 4px; font: 12px "Liberation Sans", sans-serif;}
.node{display: flex; align-items: center; height: 14px;}
.root{gap: 5px;}
.tscene{width: 11px; height: 11px;}
.kids .node::before{content: ""; width: 9px; border-top: 1px dotted #999;}
.tshape{width: 13px; height: 13px; margin-right: 2px;}
.kids{margin-left: 20px; border-left: 1px dotted #999;}
.node em{padding: 0 10px 0 2px; line-height: 14px;}
.node.sel em{background: #39f; color: #fff;}
.dots{display: flex; gap: 12px; margin-left: auto;}
.dots i{width: 3px; height: 3px; border-radius: 50%; background: #111;}

/* status */
.status{display: flex; height: 21px; flex: none; border-top: 1px solid #999; background: #f0eceb;}
.docs{display: flex; align-items: center; width: 313px; gap: 2px; padding-left: 1px; background: linear-gradient(#8a8a8a, #b4b4b4); border-right: 1px solid #fff;}
.nav{width: 13px; height: 13px; background: #f6f6f6;}
.doctab{align-self: flex-start; height: 18px; width: 68px; background: #fff; clip-path: polygon(0 0, 100% 0, 87% 100%, 13% 100%); font-weight: 600;}
.hint{flex: 1; border-left: 1px solid #888; margin-left: 2px; padding-left: 9px; line-height: 20px; white-space: nowrap;}
.cell{border-left: 1px solid #ddd; padding: 0 2px; line-height: 20px; white-space: nowrap;}

/* taskbar */
.taskbar{display: flex; height: 38px; flex: none; gap: 2px; color: #fff; background: linear-gradient(#8b9097 0, #5b616b 20%, #4a505b 50%, #434854 100%);}
.orb{width: 54px;}
.ie{width: 55px;}
.task{width: 128px; justify-content: flex-start; gap: 6px; padding-left: 9px; border: 1px solid #7b818a; background: linear-gradient(#878c92, #565c66 50%, #4b515c);}
.task:nth-child(3) span{margin-left: 6px;}
.task.dark{background: linear-gradient(#4c4f55, #26282c); border-color: #333; padding-left: 7px; gap: 2px;}
.task.blue{background: linear-gradient(#7f9fbb, #3f6386 60%, #4378a3); border-color: #9db6ca;}
.tray{display: flex; align-items: center; margin-left: auto; white-space: nowrap;}
.chev{align-self: flex-start; font-size: 15px; line-height: 16px; margin: 0 14px 0 7px;}
.v3{margin: 0 18px 0 14px;}
.clock{display: flex; flex-direction: column; align-items: center; line-height: 17px;}
.peek{width: 11px; height: 38px; margin-left: 11px; border-left: 1px solid #30343c; background: #6b717a;}
```
FILE: rulers.js
```
var NS = "http://www.w3.org/2000/svg";

function line(svg, x1, y1, x2, y2) {
	var l = document.createElementNS(NS, "path");
	l.setAttribute("d", "M" + x1 + " " + y1 + "L" + x2 + " " + y2);
	l.setAttribute("stroke", "#222");
	svg.appendChild(l);
}

function label(svg, x, y, text, size, vertical) {
	var t = document.createElementNS(NS, "text");
	t.setAttribute("x", x);
	t.setAttribute("y", y);
	t.setAttribute("text-anchor", "middle");
	t.setAttribute("font-family", "Liberation Sans, sans-serif");
	t.setAttribute("font-size", size);
	if (vertical) t.setAttribute("transform", "rotate(-90 " + x + " " + y + ")");
	t.textContent = text;
	svg.appendChild(t);
}

// timeline: 12px a frame, a number on 1 and on every fifth
function drawFrames(svg) {
	var width = svg.getBoundingClientRect().width;
	for (var f = 1; (f - 1) * 12 < width; f++) {
		var x = (f - 1) * 12;
		line(svg, x + 0.5, 2, x + 0.5, 4);
		line(svg, x + 0.5, 24, x + 0.5, 27);
		if (f == 1 || f % 5 == 0) label(svg, x + 7, 18, f, 12);
	}
}

// stage rulers: 50 units = 41px, ticks every 5 units
var STEP = 4.105;
function tickLength(u) {
	return u % 50 == 0 ? 6 : u % 10 == 0 ? 4 : 3;
}

function drawHorizontal(svg) {
	var width = svg.getBoundingClientRect().width;
	for (var u = -55; ; u += 5) {
		var x = Math.round(48 + u / 5 * STEP) + 0.5;
		if (x > width) break;
		line(svg, x, 18 - tickLength(u), x, 18);
		if (u % 50 == 0) label(svg, x, 12, u, 10);
	}
}

function drawVertical(svg) {
	var height = svg.getBoundingClientRect().height;
	for (var u = 0; ; u += 5) {
		var y = Math.round(23 + u / 5 * STEP) + 0.5;
		if (y > height) break;
		line(svg, 20 - tickLength(u), y, 20, y);
		if (u % 50 == 0) label(svg, 12, y, u, 10, true);
	}
}

drawFrames(document.getElementById("frameRuler"));
drawHorizontal(document.getElementById("hRuler"));
drawVertical(document.getElementById("vRuler"));
```
